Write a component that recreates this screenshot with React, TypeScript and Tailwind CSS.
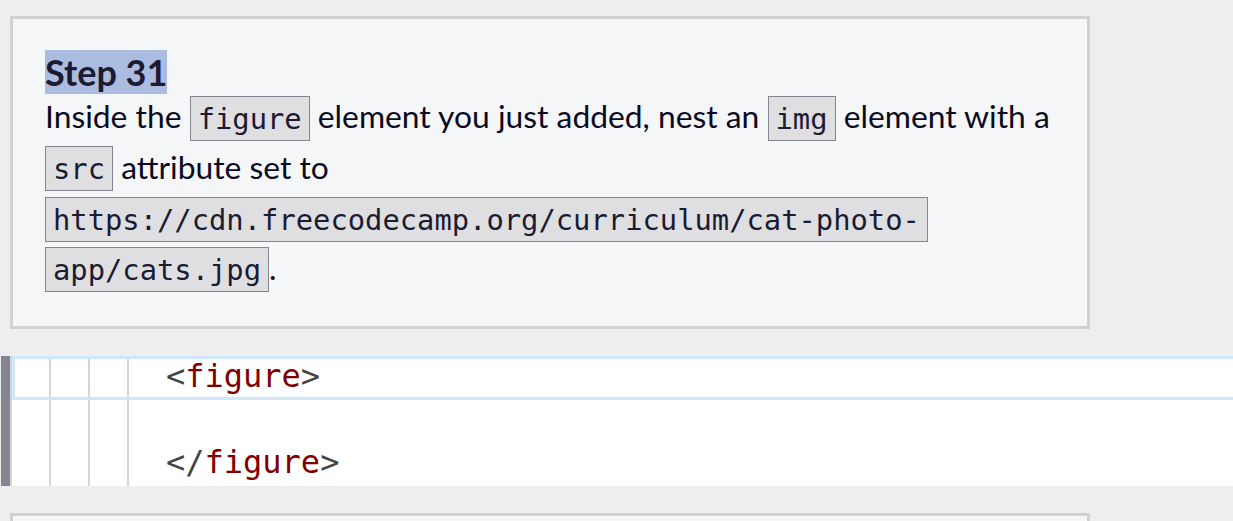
import React from 'react';

const codeCls =
  "border border-[#858591] bg-[#dfdfe2] px-[7px] py-[4.5px] text-[#1b1b32] text-[28.8px] leading-none font-['DejaVu_Sans_Mono',monospace] [box-decoration-break:clone]";

function Guides() {
  return (
    <div className="pointer-events-none absolute inset-y-0 left-0 flex">
      <div className="w-[39px] border-r-2 border-[#d6d6d6]" />
      <div className="w-[39px] border-r-2 border-[#d6d6d6]" />
      <div className="w-[39px] border-r-2 border-[#d6d6d6]" />
    </div>
  );
}

export default function App() {
  return (
    <div className="h-[521px] overflow-hidden bg-[#eeeeee] pt-4 font-['Lato',sans-serif]">
      {/* Instructions card */}
      <div className="ml-[10px] w-[1080px] border-[3px] border-[#d0d0d5] bg-[#f5f6f7] pl-8 pr-6 pt-[34px] pb-[33px]">
        <h2 className="text-[36px] font-bold leading-[38px] text-[#1b1b32]">
          <span className="bg-[#acbbe0]">Step 31</span>
        </h2>
        <p className="text-[31.8px] leading-[50.5px] text-[#0a0a23]">
          Inside the <code className={codeCls}>figure</code> element you just added, nest an{' '}
          <code className={codeCls}>img</code> element with a <code className={codeCls}>src</code>{' '}
          attribute set to{' '}
          <code className={codeCls}>
            https://cdn.freecodecamp.org/curriculum/cat-photo-app/cats.jpg
          </code>
          .
        </p>
      </div>

      {/* Editor */}
      <div className="relative mt-[27px] flex h-[130px] bg-white">
        <div className="w-[10px] shrink-0 border-l border-[#eeeeee] bg-[#858591]" />
        <div className="w-[2px] shrink-0 bg-[#d6d6d6]" />
        <div className="relative flex-1 font-['DejaVu_Sans_Mono',monospace] text-[32px] leading-[43px]">
          <Guides />
          <div className="relative h-[44px] border-[3px] border-r-0 border-[#cfe7fa] pl-[151px] leading-[35px]">
            <span className="text-[#444444]">&lt;</span>
            <span className="text-[#800000]">figure</span>
            <span className="text-[#444444]">&gt;</span>
          </div>
          <div className="h-[43px]" />
          <div className="relative h-[43px] pl-[154px] leading-[38px]">
            <span className="text-[#444444]">&lt;/</span>
            <span className="text-[#800000]">figure</span>
            <span className="text-[#444444]">&gt;</span>
          </div>
        </div>
      </div>

      {/* Next card */}
      <div className="ml-[10px] mt-[27px] h-[60px] w-[1080px] border-[3px] border-[#d0d0d5] bg-[#f5f6f7]" />
    </div>
  );
}
